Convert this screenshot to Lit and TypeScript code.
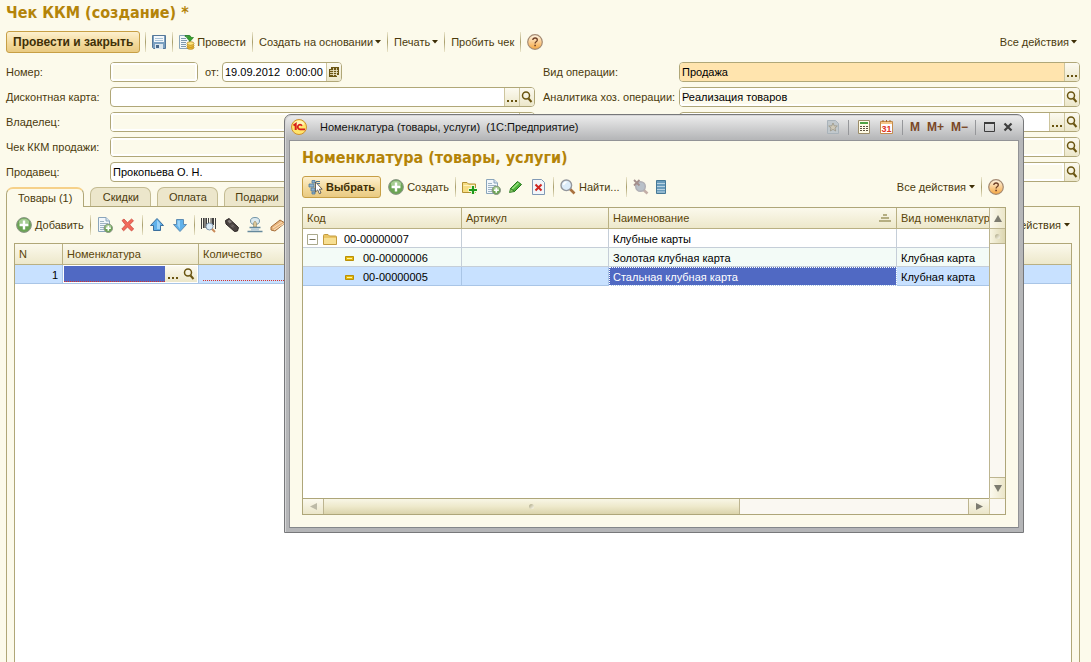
import { LitElement, html, svg, css, nothing, TemplateResult } from "lit";
import { customElement } from "lit/decorators.js";
import { classMap } from "lit/directives/class-map.js";

const icon = (content: unknown, w = 16, h = 16) =>
  html`<svg class="icon" width=${w} height=${h} viewBox="0 0 ${w} ${h}" aria-hidden="true">${content}</svg>`;

const plusBall = (x: number, y: number, r: number) => svg`
  <circle cx=${x} cy=${y} r=${r} fill="#6ba454" stroke="#8c9688" stroke-width="1"></circle>
  <ellipse cx=${x} cy=${y - r * 0.4} rx=${r * 0.7} ry=${r * 0.45} fill="#a5cc92"></ellipse>
  <path d="M${x} ${y - r * 0.6}V${y + r * 0.6}M${x - r * 0.6} ${y}H${x + r * 0.6}" stroke="#fff" stroke-width=${r > 5 ? 2.4 : 1.6}></path>`;

const sheet = svg`
  <path d="M1.500 .5H9L12.500 4V14.500H1.500Z" fill="#f2f7fb" stroke="#8aa5bb"></path>
  <path d="M9 .5V4H12.500" fill="#d5e3ee" stroke="#8aa5bb"></path>
  <path d="M3 4.500H7M3 6.500H11M3 8.500H10M3 10.500H9M3 12.500H8" stroke="#9db3c4"></path>`;

const icons = {
  save: icon(svg`
    <path d="M1.500 1.500H14.500V14.500H2.500L1.500 13.500Z" fill="#7ba0c0" stroke="#55789a"></path>
    <path d="M3 2H13V8H3Z" fill="#f4f8fb"></path>
    <path d="M4 4.500H12M4 6.500H12" stroke="#a9c2d6"></path>
    <path d="M4 10H12V15H4Z" fill="#dbe6ee"></path><path d="M5 11H8V14H5Z" fill="#49698a"></path>`),
  post: icon(svg`
    <path d="M.5 1.500H10.500V14.500H.5Z" fill="#f3f8fa" stroke="#87a3b8"></path>
    <path d="M2 4.500H7M2 6.500H8M2 8.500H7M2 10.500H7M2 12.500H7" stroke="#7f99ad"></path>
    <path d="M6 1.500H10Q12 1.500 12 3.500H14.500L11 7.500L7.500 3.500H9.500Q9.500 2.500 6 2.500Z" fill="#35a02c" stroke="#177214" stroke-width=".6"></path>
    <ellipse cx="11.500" cy="13.500" rx="3.500" ry="1.800" fill="#f1bd33" stroke="#ab7b12" stroke-width=".7"></ellipse>
    <ellipse cx="11.500" cy="11.500" rx="3.500" ry="1.800" fill="#f7ca45" stroke="#ab7b12" stroke-width=".7"></ellipse>
    <ellipse cx="11.500" cy="9.500" rx="3.500" ry="1.800" fill="#ffe680" stroke="#ab7b12" stroke-width=".7"></ellipse>`),
  help: icon(svg`
    <defs><linearGradient id="h" x2="0" y2="1"><stop offset="0" stop-color="#fff5e4"></stop><stop offset="1" stop-color="#f5a640"></stop></linearGradient></defs>
    <circle cx="8" cy="8" r="7.300" fill="url(#h)" stroke="#a48a72" stroke-width="1.200"></circle>
    <path d="M5.800 6Q6 4 8.100 4Q10.300 4 10.300 5.900Q10.300 7 9.100 7.700Q8.100 8.300 8.100 9.600" fill="none" stroke="#6b3c25" stroke-width="1.300"></path>
    <path d="M7.300 10.700H8.900V12.200H7.300Z" fill="#6b3c25"></path>`),
  add: icon(plusBall(8, 8, 7.4)),
  copy: icon(svg`${sheet}${plusBall(11.3, 11.3, 4.2)}`),
  cross: icon(svg`<path d="M2 3.500L4 2L7.500 5.700L11.500 2L13.500 3.700L9.700 7.800L13.700 12L11.500 14L7.500 10L3.700 13.800L1.800 12L5.500 7.900Z" fill="#f2695a" stroke="#c43f33" stroke-width=".7"></path>`),
  up: icon(svg`<path d="M8 1.500L14.500 8.500H11.500V13.500H4.500V8.500H1.500Z" fill="#5fb1ea" stroke="#3b6f9d"></path><path d="M8 3L11 6.500V12H8Z" fill="#9bd3f7"></path>`),
  down: icon(svg`<path d="M8 14.500L14.500 7.500H11.500V2.500H4.500V7.500H1.500Z" fill="#5fb1ea" stroke="#5e8db3"></path><path d="M5.500 3.500H8V12L5.500 8.500Z" fill="#9bd3f7"></path>`),
  barcode: icon(svg`
    <path d="M.5 1V12M2.500 1V11M5.500 1V11M7.500 1V7M10 1V6M12.500 1V8M14.500 1V12" stroke="#404040"></path>
    <path d="M4 1V11M11.500 1V7" stroke="#404040" stroke-width="1.300"></path>
    <circle cx="8.500" cy="9.500" r="3.500" fill="#d9ebf8" stroke="#7c92a6"></circle>
    <path d="M11 12L14 15" stroke="#c98a58" stroke-width="2"></path>`),
  device: icon(svg`
    <path d="M1.500 3.500L5 1.500L14.500 10.500L13.500 14L10.500 14.500L2 7Z" fill="#4a4341" stroke="#2c2625"></path>
    <path d="M3.500 4L5.500 2.800L8 5L5.500 6.500Z" fill="#8c8583"></path>
    <path d="M8 7.500L10 9.500M7 8.500L9 10.500" stroke="#8c8583"></path>`),
  stamp: icon(svg`
    <ellipse cx="8" cy="4" rx="4.500" ry="3.500" fill="#dbe9ef" stroke="#7295a8"></ellipse>
    <path d="M6.500 6L8 4L9.500 6V10H6.500Z" fill="#dcc89a" stroke="#9a8a62" stroke-width=".6"></path>
    <path d="M2.500 10.500H13.500M.5 14.500H15.500" stroke="#65899c" stroke-width="1.400"></path>
    <path d="M4 11.200H12V13.800H4Z" fill="#b9cfda"></path>`),
  edge: icon(svg`
    <path d="M1 10L10 3L15 6L5 14L1 13Z" fill="#e8b57c" stroke="#a66e3a"></path>
    <path d="M3 11L12 5M4 13L14 6.500" stroke="#fae0bd"></path>`),
  select: icon(svg`
    <path d="M4 1.500H7V4H4ZM1 5H6V8H1ZM3 9H7V12H3ZM4 13H7V15H4Z" fill="#8fb3cf" stroke="#4c7799" stroke-width=".8"></path>
    <path d="M8 2.500H12M9 4.500H12" stroke="#4c7799"></path>
    <path d="M7.500 3V13L9.700 10.900L11.300 14.700L13 14L11.400 10.200H14.200Z" fill="#fff" stroke="#444" stroke-width=".8"></path>`),
  folderAdd: icon(svg`
    <path d="M.5 3.500H5L6.500 5H13.500V13.500H.5Z" fill="#f6dd83" stroke="#b39234"></path>
    <path d="M1.500 6H12.500V7H1.500Z" fill="#fff3be"></path>
    <path d="M11 6.500V15.500M6.500 11H15.500" stroke="#f8fbe6" stroke-width="4"></path>
    <path d="M11 7V15M7 11H15" stroke="#1f9a1c" stroke-width="2.200"></path>`),
  pencil: icon(svg`
    <path d="M2.500 9.500L9.500 2.500L13.500 5.500L6.500 12.500Z" fill="#4db33a" stroke="#23741a"></path>
    <path d="M4 10L10.500 4" stroke="#9be07f" stroke-width="1.500"></path>
    <path d="M2.500 9.500L1.500 13.500L6.500 12.500Z" fill="#8fca6a" stroke="#23741a" stroke-width=".8"></path>`),
  remove: icon(svg`
    <path d="M1.500 .5H10.500L13.500 3.500V15.500H1.500Z" fill="#f2f6fa" stroke="#8199b5"></path>
    <path d="M4.500 5.500L10.500 11.500M10.500 5.500L4.500 11.500" stroke="#ce2620" stroke-width="2"></path>`),
  find: icon(svg`
    <path d="M10 10L14.500 14.500" stroke="#a9713f" stroke-width="2.600"></path>
    <circle cx="6.300" cy="6.300" r="5.300" fill="#dcecf9" stroke="#93969c" stroke-width="1.400"></circle>
    <path d="M3.500 6Q4 3.500 6.500 3.200" fill="none" stroke="#fff" stroke-width="1.500"></path>`),
  findOff: icon(svg`
    <path d="M10 10.500L14.500 14.500" stroke="#c4afa8" stroke-width="2.600"></path>
    <circle cx="7.500" cy="7.500" r="4.800" fill="#b9c1c9" stroke="#b0afb4" stroke-width="1.400"></circle>
    <path d="M1 1L6.500 6.500M6.500 1L1 6.500" stroke="#a48f8c" stroke-width="1.800"></path>`),
  list: icon(svg`
    <path d="M.5 1.500H9.500V14.500H.5Z" fill="#6a9cbc" stroke="#467997"></path>
    <path d="M1 4.500H9M1 7.500H9M1 10.500H9M1 13H9" stroke="#b9d3e2" stroke-width="1"></path>`, 10, 16),
  lens: icon(svg`
    <circle cx="5" cy="4.500" r="3.500" fill="none" stroke="#695410" stroke-width="1.500"></circle>
    <path d="M7.500 7.500L10.500 11" stroke="#695410" stroke-width="2"></path>`, 12, 12),
  grid: icon(svg`
    <path d="M3 1H11V9H9V11H1V3H3Z" fill="#6b5614"></path>
    <path d="M5.500 2V10M8.500 2V10M2 4.500H10M2 6.500H10M2 8.500H9" stroke="#f1ebcd" stroke-width=".8"></path>`, 12, 12),
  dots: icon(svg`<path d="M1 9H3V11H1ZM5 9H7V11H5ZM9 9H11V11H9Z" fill="#695410"></path>`, 12, 12),
  caret: icon(svg`<path d="M0 0H6L3 3.500Z" fill="#3d2e06"></path>`, 6, 4),
  folder: icon(svg`
    <path d="M.5 2.500Q.5 1.500 1.500 1.500H5L6.500 3H12.500Q13.500 3 13.500 4V11.500H.5Z" fill="#eac565" stroke="#c39b3f"></path>
    <path d="M1 5H13V11H1Z" fill="#f7df93"></path>`, 14, 13),
  item: icon(svg`<path d="M.5 .5H8.500V4.500H.5Z" fill="#e5b90d" stroke="#b98f07"></path><path d="M2 2.500H7" stroke="#fff3a6"></path>`, 9, 5),
  minus: icon(svg`<path d="M.5 .5H10.500V10.500H.5Z" fill="#fff" stroke="#aaa98d"></path><path d="M2.500 5.500H8.500" stroke="#77735a"></path>`, 11, 11),
  sort: icon(svg`<path d="M4 1H8V3H4ZM2 4H10V6H2ZM0 7H12V9H0Z" fill="#b5ae82"></path>`, 12, 10),
  left: icon(svg`<path d="M7 0V7L0 3.500Z" fill="#bdbaa7"></path>`, 7, 7),
  right: icon(svg`<path d="M0 0V7L7 3.500Z" fill="#7c7b70"></path>`, 7, 7),
  top: icon(svg`<path d="M0 7H8L4 0Z" fill="#7c7b70"></path>`, 8, 7),
  bottom: icon(svg`<path d="M0 0H8L4 7Z" fill="#7c7b70"></path>`, 8, 7),
  logo: icon(svg`
    <circle cx="8" cy="8" r="7.500" fill="#ffe56b" stroke="#cf8f2e"></circle>
    <ellipse cx="8" cy="4.500" rx="5" ry="3" fill="#fff6b8"></ellipse>
    <path d="M2.500 6.500L4.700 5V11" fill="none" stroke="#d8201a" stroke-width="2"></path>
    <path d="M11 6.800A2.300 2.300 0 1 0 9 10.300H14" fill="none" stroke="#d8201a" stroke-width="1.800"></path>`),
  star: icon(svg`
    <path d="M2.500 1.500H10.500L13.500 4.500V14.500H2.500Z" fill="#c1c8cc" stroke="#a9b3ba"></path>
    <path d="M8 4L9.200 6.800L12.300 7L10 9L10.700 12L8 10.400L5.300 12L6 9L3.700 7L6.800 6.800Z" fill="#cfc9b8" stroke="#999587" stroke-width=".8"></path>`),
  calc: icon(svg`
    <path d="M2.500 1.500H13.500V14.500H2.500Z" fill="#fffbe5" stroke="#9b8c68"></path>
    <path d="M4 3H12V5H4Z" fill="#4fa344"></path>
    <path d="M4 7H6V8H4ZM7 7H9V8H7ZM10 7H12V8H10ZM4 9H6V10H4ZM7 9H9V10H7ZM10 9H12V10H10ZM4 11H6V12H4ZM7 11H9V12H7ZM10 11H12V12H10Z" fill="#5d5342"></path>`),
  calendar: icon(svg`
    <path d="M1.500 2.500H13.500V14.500H1.500Z" fill="#fff" stroke="#c58c4d"></path>
    <path d="M2 3H13V5H2Z" fill="#f5c687"></path>
    <path d="M4 1V3M7.500 1V3M11 1V3" stroke="#a06a2f"></path>
    <text x="7.500" y="13" text-anchor="middle" font-size="9" font-weight="bold" font-family="Liberation Sans, sans-serif" fill="#e0341f">31</text>`),
  maximize: icon(svg`<path d="M1.500 2.500H11.500V10.500H1.500Z" fill="none" stroke="#3c3c3c"></path><path d="M1 2H12" stroke="#3c3c3c" stroke-width="2"></path>`, 13, 12),
  close: icon(svg`<path d="M1.500 1.500L8.500 8.500M8.500 1.500L1.500 8.500" stroke="#3f3f3f" stroke-width="2.200"></path>`, 10, 10),
};

type Action = "dots" | "lens" | "grid";
interface Field {
  id: string;
  label?: string;
  value?: string;
  look?: "plain" | "locked" | "accent";
  actions?: Action[];
}

const actionNames: Record<Action, string> = { dots: "Выбрать", lens: "Открыть", grid: "Календарь" };

const leftFields: Field[] = [
  { id: "card", label: "Дисконтная карта:", actions: ["dots", "lens"] },
  { id: "owner", label: "Владелец:", look: "locked", actions: ["lens"] },
  { id: "sale", label: "Чек ККМ продажи:", look: "locked", actions: ["lens"] },
  { id: "seller", label: "Продавец:", value: "Прокопьева О. Н.", actions: ["dots", "lens"] },
];

const rightFields: Field[] = [
  { id: "kind", label: "Вид операции:", value: "Продажа", look: "accent", actions: ["dots"] },
  { id: "analytics", label: "Аналитика хоз. операции:", value: "Реализация товаров", look: "locked", actions: ["lens"] },
  { id: "register", actions: ["dots", "lens"] },
  { id: "org", look: "locked", actions: ["lens"] },
  { id: "store", look: "locked", actions: ["lens"] },
];

const cards = [
  { code: "00-00000007", name: "Клубные карты", kind: "", group: true },
  { code: "00-00000006", name: "Золотая клубная карта", kind: "Клубная карта" },
  { code: "00-00000005", name: "Стальная клубная карта", kind: "Клубная карта", current: true },
];

const shared = css`
  * { box-sizing: border-box; }
  .icon { display: block; flex: none; }
  button, input {
    font: inherit; color: inherit; margin: 0; padding: 0; border: 0; background: none; border-radius: 0;
  }
  button { display: flex; align-items: center; white-space: nowrap; }
  h1, h2 {
    margin: 0; color: #b48409; font: bold 16px/20px "DejaVu Sans Condensed", "DejaVu Sans", sans-serif; white-space: nowrap;
  }
  .bar { display: flex; align-items: center; height: 24px; }
  .tool { height: 22px; gap: 3px; }
  .sep {
    width: 1px; height: 20px; margin: 0 6px; flex: none;
    background: linear-gradient(#ebe6cc, #a99f6c 50%, #ebe6cc);
  }
  .push { margin-left: auto; }
  .default {
    height: 22px; padding: 0 5px; gap: 2px; border: 1px solid #c79f45; border-radius: 3px; font-weight: bold;
    background: linear-gradient(#fdf0ce, #f2d899 60%, #e9ca82); color: #402f06;
  }
  table { border-collapse: separate; border-spacing: 0; table-layout: fixed; width: 100%; }
  th {
    height: 21px; padding: 0 4px; text-align: left; font-weight: normal; color: #5a4508; overflow: hidden;
    white-space: nowrap; background: linear-gradient(#fbf9ec, #ede8cb); border-bottom: 1px solid #b9b083;
    border-right: 1px solid #b9b083;
  }
  td { height: 19px; padding: 2px 4px 0; color: #000; border-right: 1px solid #c5ced8; border-bottom: 1px solid #c5ced8; white-space: nowrap; }
  th:last-child, td:last-child { border-right: 0; }
`;

@customElement("nomenclature-dialog")
export class NomenclatureDialog extends LitElement {
  static styles = [shared, css`
    :host {
      display: flex; flex-direction: column; padding: 0 4px 4px; border: 1px solid #77787a;
      border-radius: 7px 7px 0 0; background: linear-gradient(#ededed, #b6b7b9 24px, #b4b5b7);
      box-shadow: inset 1px 1px 0 #d5d5d6; box-sizing: border-box;
    }
    .caption { display: flex; align-items: center; height: 24px; margin-bottom: 1px; color: #111; padding: 0 6px 0 2px; }
    .caption .title { margin-left: 13px; flex: 1; white-space: nowrap; }
    .tools { display: flex; align-items: center; gap: 7px; }
    .tools .cut { width: 1px; height: 15px; background: #96979a; }
    .mem { font-weight: bold; color: #7a4726; font-size: 12px; }
    .body {
      flex: 1; display: flex; flex-direction: column; padding: 7px 12px 12px; background: #fcfaeb;
      border: 1px solid #929396; border-bottom: 1px solid #84878a; min-height: 0;
    }
    .body .bar { margin: 7px 0 8px; padding-right: 2px; }
    .wide { margin-left: 7px; }
    .grid {
      flex: 1; display: grid; grid-template-columns: minmax(0, 1fr) 16px; grid-template-rows: minmax(0, 1fr) 16px;
      border: 1px solid #aea679; background: #fff;
    }
    .grid table { align-self: start; }
    .c1 { width: 159px; } .c2 { width: 147px; } .c4 { width: 92px; }
    .cell { display: flex; align-items: center; }
    .cell .folder { display: flex; margin: 0 7px 0 5px; }
    .child { padding-left: 38px; gap: 9px; }
    .sorted { display: flex; align-items: center; justify-content: space-between; padding-right: 1px; }
    .even td { background: #f3fbf7; }
    .current td { background: #c8e1ff; border-color: #a9c5e6; }
    .current td.picked { background: #5069c3; color: #fff; outline: 1px dotted #fff; outline-offset: -1px; }
    th.tight { padding-right: 0; }
    .vbar, .hbar { display: flex; background: #faf8f2; }
    .vbar { flex-direction: column; border-left: 1px solid #bdb590; }
    .hbar { border-top: 1px solid #aea679; }
    .vbar button, .hbar button { justify-content: center; flex: none; }
    .vbar button { height: 21px; background: linear-gradient(90deg, #fbf9ee, #ebe6c9); border-bottom: 1px solid #bdb590; }
    .vbar button.end { border-top: 1px solid #bdb590; border-bottom: 0; }
    .vthumb { height: 15px; border-bottom: 1px solid #bdb590; background: linear-gradient(90deg, #f8f5e2, #dcd6b0); }
    .hbar button { width: 21px; background: linear-gradient(#fbf9ee, #ebe6c9); border-right: 1px solid #bdb590; }
    .hbar button.end { border-left: 1px solid #bdb590; border-right: 0; }
    .hthumb { flex: 416 0 0; border-right: 1px solid #bdb590; background: linear-gradient(#f8f6e6, #eee9cb 50%, #dbd4ac); }
    .rest { flex: 228 0 0; }
    .space { flex: 1; }
    .grip { display: flex; align-items: center; justify-content: center; }
    .grip i { width: 5px; height: 5px; border-radius: 3px; background: linear-gradient(135deg, #aaa582, #fffdf0); }
    .corner { border-top: 1px solid #d4cba4; border-left: 1px solid #d4cba4; background: #faf8f2; }
  `];

  render() {
    return html`
      <div class="caption">
        ${icons.logo}<span class="title">Номенклатура (товары, услуги)&nbsp; (1С:Предприятие)</span>
        <div class="tools">
          <button aria-label="В избранное">${icons.star}</button><i class="cut"></i>
          <button aria-label="Калькулятор">${icons.calc}</button>
          <button aria-label="Календарь">${icons.calendar}</button><i class="cut"></i>
          <button class="mem">M</button><button class="mem">M+</button><button class="mem">M−</button><i class="cut"></i>
          <button aria-label="Развернуть">${icons.maximize}</button>
          <button aria-label="Закрыть">${icons.close}</button>
        </div>
      </div>
      <div class="body">
        <h2>Номенклатура (товары, услуги)</h2>
        <div class="bar">
          <button class="default">${icons.select}Выбрать</button>
          <button class="tool wide">${icons.add}Создать</button><i class="sep"></i>
          <button class="tool" aria-label="Создать группу">${icons.folderAdd}</button>
          <button class="tool wide" aria-label="Скопировать">${icons.copy}</button>
          <button class="tool wide" aria-label="Изменить">${icons.pencil}</button>
          <button class="tool wide" aria-label="Удалить">${icons.remove}</button><i class="sep"></i>
          <button class="tool">${icons.find}Найти...</button><i class="sep"></i>
          <button class="tool" aria-label="Отменить поиск">${icons.findOff}</button>
          <button class="tool wide" aria-label="Список">${icons.list}</button>
          <button class="tool push">Все действия${icons.caret}</button><i class="sep"></i>
          <button class="tool" aria-label="Справка">${icons.help}</button>
        </div>
        <div class="grid">
          <table>
            <colgroup><col class="c1"><col class="c2"><col><col class="c4"></colgroup>
            <thead><tr>
              <th>Код</th><th>Артикул</th>
              <th><span class="sorted">Наименование${icons.sort}</span></th>
              <th class="tight">Вид номенклатуры</th>
            </tr></thead>
            <tbody>${cards.map((card, i) => html`
              <tr class=${classMap({ even: i === 1, current: !!card.current })}>
                <td>${card.group
                  ? html`<span class="cell">${icons.minus}<span class="folder">${icons.folder}</span>${card.code}</span>`
                  : html`<span class="cell child">${icons.item}${card.code}</span>`}</td>
                <td></td>
                <td class=${classMap({ picked: !!card.current })}>${card.name}</td>
                <td>${card.kind}</td>
              </tr>`)}</tbody>
          </table>
          <div class="vbar">
            <button aria-label="Вверх">${icons.top}</button>
            <div class="vthumb grip"><i></i></div>
            <div class="space"></div>
            <button class="end" aria-label="Вниз">${icons.bottom}</button>
          </div>
          <div class="hbar">
            <button aria-label="Влево">${icons.left}</button>
            <div class="hthumb grip"><i></i></div>
            <div class="rest"></div>
            <button class="end" aria-label="Вправо">${icons.right}</button>
          </div>
          <div class="corner"></div>
        </div>
      </div>`;
  }
}

@customElement("app-root")
export class AppRoot extends LitElement {
  static styles = [shared, css`
    :host {
      display: flex; flex-direction: column; position: relative; min-height: 100vh; box-sizing: border-box;
      padding: 3px 11px 0 6px; background: #fcfaeb; color: #4b3a0d; overflow: hidden;
      font: 11px/14px "Liberation Sans", Arial, sans-serif;
    }
    .main { margin: 7px 0 8px; padding-right: 2px; }
    .main .default { font-size: 12px; padding: 0 6px; }
    .main .sep { margin: 0 5px; }
    .main .tool { gap: 2px; }
    .main .text { padding: 0 1px; }
    .form { display: grid; grid-template-columns: minmax(0, 529fr) minmax(0, 537fr); column-gap: 8px; }
    .column { display: flex; flex-direction: column; gap: 5px; }
    .row { display: flex; align-items: center; }
    .row > label { width: 104px; flex: none; white-space: nowrap; }
    .column.second .row { padding-left: 136px; }
    .column.second .row > label { width: 136px; margin-left: -136px; }
    .row > label.from { width: auto; margin: 0 3px 0 7px; }
    .field {
      display: flex; flex: 1; min-width: 0; height: 20px; border: 1px solid #b0a778; border-radius: 4px;
      background: #fff; overflow: hidden; color: #000;
    }
    .field input { flex: 1; min-width: 0; padding: 0 2px; }
    .field.locked input { background: #fcfaeb; box-shadow: inset 0 0 0 2px #fff; }
    .field.accent input { background: #ffe4ae; }
    .field button { width: 15px; justify-content: center; background: linear-gradient(#fcfaf0, #ece7ca); border-left: 1px solid #cdc59d; }
    .field.number { flex: 0 0 88px; }
    .field.date { flex: 0 0 120px; }
    .tabs { display: flex; gap: 6px; margin-top: 5px; }
    .tab {
      height: 19px; min-width: 61px; padding: 0 10px; justify-content: center; border: 1px solid #c3bb92;
      border-bottom: 0; border-radius: 7px 7px 0 0; background: #ece6cb;
    }
    .tab.active {
      height: 20px; margin-bottom: -1px; padding: 0 11px; border-color: #b0a778; border-top: 2px solid #f6d18a;
      background: #fcfaeb; z-index: 1;
    }
    .panel { flex: 1; display: flex; flex-direction: column; border: 1px solid #b0a778; border-bottom: 0; padding: 6px 7px 0; }
    .panel .bar { padding: 0 2px; margin-bottom: 6px; }
    .gap { margin-left: 7px; }
    .goods { flex: 1; border: 1px solid #b0a778; border-bottom: 0; background: #fff; }
    .n { width: 48px; } .item { width: 136px; } .qty { width: 136px; }
    .goods td { background: #c8e1ff; border-color: #a9c5e6; }
    .goods td.right { text-align: right; }
    .goods td.edit { padding: 0; }
    .editor { display: flex; height: 18px; background: #fff; border: 1px solid #fff; }
    .editor input { flex: 1; min-width: 0; background: #5069c3; border-bottom: 1px dotted #d6322b; color: #fff; }
    .editor button { width: 16px; justify-content: center; background: linear-gradient(#fcfaf0, #ece7ca); }
    .need { height: 12px; border-bottom: 1px dotted #d6322b; }
    .window { position: absolute; left: 284px; top: 114px; width: 740px; height: 419px; z-index: 2; }
  `];

  private box(field: Field, extra = ""): TemplateResult {
    const look = field.look ?? "plain";
    return html`<div class="field ${look} ${extra}">
      <input id=${field.id} .value=${field.value ?? ""} ?readonly=${look === "locked"}>
      ${(field.actions ?? []).map((a) => html`<button aria-label=${actionNames[a]}>${icons[a]}</button>`)}
    </div>`;
  }

  private line(field: Field) {
    return html`<div class="row">
      ${field.label ? html`<label for=${field.id}>${field.label}</label>` : nothing}${this.box(field)}
    </div>`;
  }

  private tab(text: string, active = false) {
    return html`<button role="tab" aria-selected=${active} class=${classMap({ tab: true, active })}>${text}</button>`;
  }

  render() {
    return html`
      <h1>Чек ККМ (создание) *</h1>
      <div class="bar main">
        <button class="default">Провести и закрыть</button><i class="sep"></i>
        <button class="tool" aria-label="Записать">${icons.save}</button><i class="sep"></i>
        <button class="tool text">${icons.post}Провести</button><i class="sep"></i>
        <button class="tool text">Создать на основании${icons.caret}</button><i class="sep"></i>
        <button class="tool text">Печать${icons.caret}</button><i class="sep"></i>
        <button class="tool text">Пробить чек</button><i class="sep"></i>
        <button class="tool text" aria-label="Справка">${icons.help}</button>
        <button class="tool text push">Все действия${icons.caret}</button>
      </div>
      <div class="form">
        <div class="column">
          <div class="row">
            <label for="number">Номер:</label>${this.box({ id: "number", look: "locked" }, "number")}
            <label class="from" for="date">от:</label>
            ${this.box({ id: "date", value: "19.09.2012  0:00:00", actions: ["grid"] }, "date")}
          </div>
          ${leftFields.map((f) => this.line(f))}
        </div>
        <div class="column second">${rightFields.map((f) => this.line(f))}</div>
      </div>
      <div class="tabs" role="tablist">
        ${this.tab("Товары (1)", true)}${this.tab("Скидки")}${this.tab("Оплата")}${this.tab("Подарки")}
      </div>
      <section class="panel">
        <div class="bar">
          <button class="tool">${icons.add}Добавить</button><i class="sep"></i>
          <button class="tool" aria-label="Скопировать">${icons.copy}</button>
          <button class="tool gap" aria-label="Удалить">${icons.cross}</button><i class="sep"></i>
          <button class="tool" aria-label="Вверх">${icons.up}</button>
          <button class="tool gap" aria-label="Вниз">${icons.down}</button><i class="sep"></i>
          <button class="tool" aria-label="Штрихкод">${icons.barcode}</button>
          <button class="tool gap" aria-label="Терминал">${icons.device}</button>
          <button class="tool gap" aria-label="Весы">${icons.stamp}</button>
          <button class="tool gap" aria-label="Карта">${icons.edge}</button>
          <button class="tool push">Все действия${icons.caret}</button>
        </div>
        <div class="goods">
          <table>
            <colgroup><col class="n"><col class="item"><col class="qty"><col></colgroup>
            <thead><tr><th>N</th><th>Номенклатура</th><th>Количество</th><th></th></tr></thead>
            <tbody><tr>
              <td class="right">1</td>
              <td class="edit"><div class="editor">
                <input aria-label="Номенклатура"><button aria-label="Выбрать">${icons.dots}</button><button aria-label="Открыть">${icons.lens}</button>
              </div></td>
              <td><div class="need"></div></td><td></td>
            </tr></tbody>
          </table>
        </div>
      </section>
      <nomenclature-dialog class="window" role="dialog" aria-label="Номенклатура"></nomenclature-dialog>`;
  }
}
